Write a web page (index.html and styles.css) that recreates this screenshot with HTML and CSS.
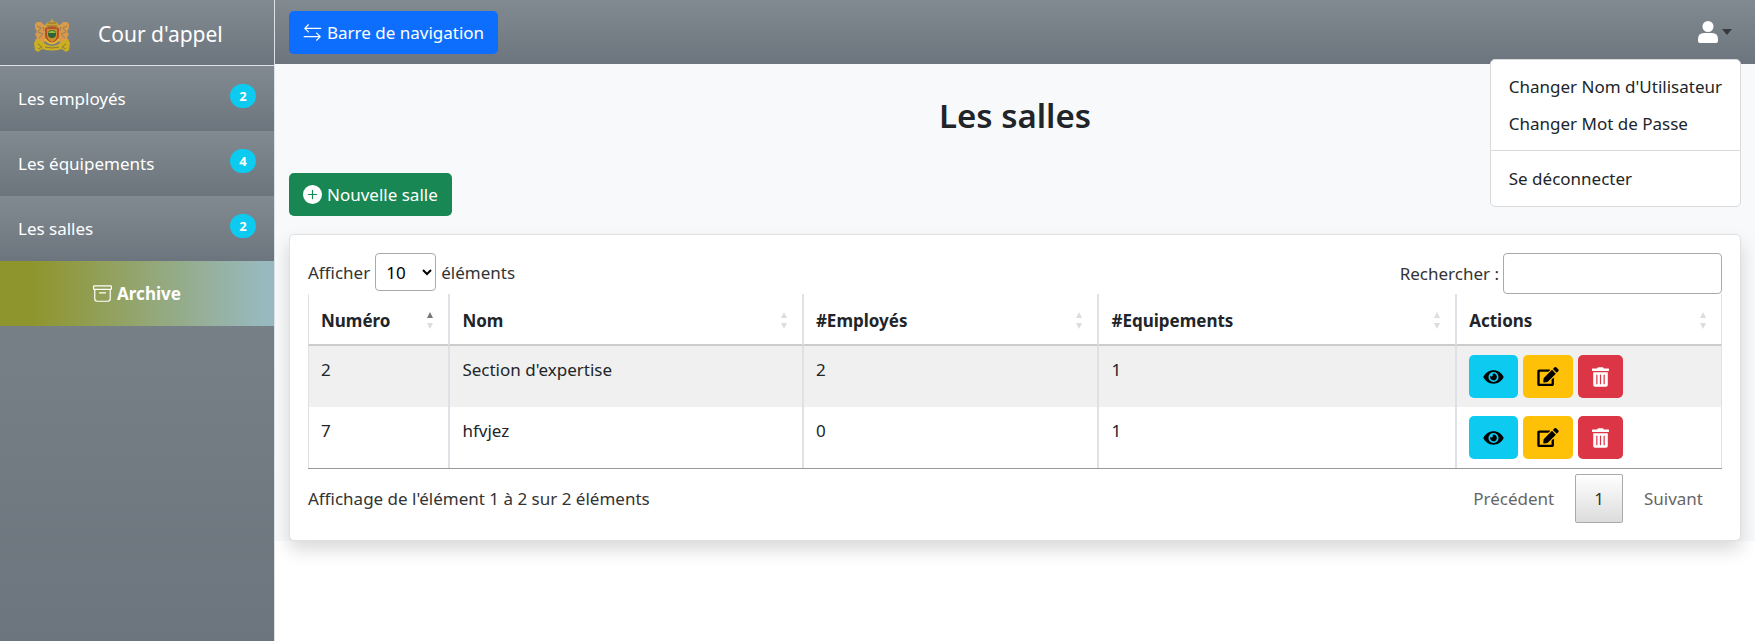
FILE: index.html
```html
<!DOCTYPE html>
<html lang="fr">
<head>
<meta charset="utf-8">
<meta name="viewport" content="width=device-width, initial-scale=1">
<title>Cour d'appel - Les salles</title>
<link rel="stylesheet" href="styles.css">
</head>
<body>
<svg class="sprite" aria-hidden="true">
  <symbol id="i-eye" viewBox="0 0 576 512"><path d="M572.5 241.4C518.3 135.600 410.900 64 288 64S57.700 135.600 3.500 241.400a32.400 32.400 0 0 0 0 29.200C57.700 376.400 165.100 448 288 448s230.300-71.600 284.500-177.400a32.400 32.400 0 0 0 0-29.200zM288 400a144 144 0 1 1 144-144 143.900 143.900 0 0 1-144 144zm0-240a95.300 95.300 0 0 0-25.300 3.800 47.900 47.900 0 0 1-66.900 66.900A95.800 95.800 0 1 0 288 160z"/></symbol>
  <symbol id="i-edit" viewBox="0 0 576 512"><path d="M402.600 83.200l90.200 90.200c3.800 3.800 3.800 10 0 13.800L274.400 405.600l-92.800 10.300c-12.400 1.400-22.900-9.100-21.500-21.500l10.300-92.800L388.800 83.200c3.800-3.800 10-3.800 13.800 0zm162-22.900l-48.800-48.800c-15.200-15.200-39.900-15.200-55.200 0l-35.400 35.400c-3.800 3.800-3.800 10 0 13.800l90.200 90.200c3.800 3.800 10 3.800 13.800 0l35.400-35.400c15.200-15.300 15.200-40 0-55.200zM384 346.200V448H64V128h229.800c3.200 0 6.200-1.300 8.500-3.500l40-40c7.600-7.600 2.200-20.500-8.500-20.500H48C21.500 64 0 85.500 0 112v352c0 26.500 21.500 48 48 48h352c26.500 0 48-21.500 48-48V306.200c0-10.700-12.900-16-20.500-8.500l-40 40c-2.200 2.300-3.500 5.300-3.500 8.500z"/></symbol>
  <symbol id="i-trash" viewBox="0 0 448 512"><path d="M32 464a48 48 0 0 0 48 48h288a48 48 0 0 0 48-48V128H32zm272-256a16 16 0 0 1 32 0v224a16 16 0 0 1-32 0zm-96 0a16 16 0 0 1 32 0v224a16 16 0 0 1-32 0zm-96 0a16 16 0 0 1 32 0v224a16 16 0 0 1-32 0zM432 32H312l-9.400-18.700A24 24 0 0 0 281.100 0H166.800a23.700 23.700 0 0 0-21.400 13.300L136 32H16A16 16 0 0 0 0 48v32a16 16 0 0 0 16 16h416a16 16 0 0 0 16-16V48a16 16 0 0 0-16-16z"/></symbol>
</svg>
<div class="layout">
  <aside class="sidebar">
    <div class="brand">
      <svg class="crest" viewBox="0 0 36 34" aria-hidden="true">
        <path d="M18 0l1 3 3 1 3 3-1 4H12l-1-4 3-3 3-1z" fill="#c9a43a"/>
        <path d="M14 5h8M13 8h10" stroke="#8e6a2a" stroke-width="1"/>
        <path d="M1 6l2-2h4l2 2 3 2 1 5-1 10-4 3-6-1-1-3 2-2-2-4 2-2-2-4z" fill="#d89a48"/>
        <path d="M35 6l-2-2h-4l-2 2-3 2-1 5 1 10 4 3 6-1 1-3-2-2 2-4-2-2 2-4z" fill="#d89a48"/>
        <path d="M3 8l4 2-3 4 5 2-4 4M33 8l-4 2 3 4-5 2 4 4M9 9l1 4M27 9l-1 4" fill="none" stroke="#8f8068" stroke-width="1"/>
        <path d="M11 10q7-3 14 0v8q0 5-7 8-7-3-7-8z" fill="#b5522b"/>
        <path d="M13 11h10v6q0 5-5 7-5-2-5-7z" fill="#c98f2c"/>
        <circle cx="18" cy="16" r="4" fill="#2f6335"/>
        <path d="M14 15q4-5 8 0z" fill="#8dbb45"/>
        <path d="M0 25q2-4 6-3l4 3q8 6 16 0l4-3q4-1 6 3l-1 7-3 2-4-3q-10 3-20 0l-4 3-3-2z" fill="#ccae22"/>
        <path d="M4 26l4 3-4 2M32 26l-4 3 4 2M11 29q7 2 14 0" fill="none" stroke="#8a7c35" stroke-width="1"/>
        <path d="M11 21q7 9 14 0" fill="none" stroke="#e2b932" stroke-width="2"/>
      </svg>
      <span>Cour d'appel</span>
    </div>
    <nav class="menu">
      <a class="menu-item" href="#">Les employés <span class="badge">2</span></a>
      <a class="menu-item" href="#">Les équipements <span class="badge">4</span></a>
      <a class="menu-item" href="#">Les salles <span class="badge">2</span></a>
      <a class="archive" href="#">
        <svg width="19" height="19" viewBox="0 0 16 16" fill="currentColor" aria-hidden="true"><path d="M0 2a1 1 0 0 1 1-1h14a1 1 0 0 1 1 1v2a1 1 0 0 1-1 1v7.500a2.500 2.500 0 0 1-2.500 2.500h-9A2.500 2.500 0 0 1 1 12.500V5a1 1 0 0 1-1-1V2zm2 3v7.500A1.500 1.500 0 0 0 3.500 14h9a1.500 1.500 0 0 0 1.500-1.500V5H2zm13-3H1v2h14V2zM5 7.500a.5.500 0 0 1 .5-.5h5a.5.500 0 0 1 0 1h-5a.5.500 0 0 1-.5-.5z"/></svg>
        Archive
      </a>
    </nav>
  </aside>
  <div class="page">
    <header class="topbar">
      <button class="btn btn-primary" type="button">
        <svg width="19" height="19" viewBox="0 0 16 16" fill="none" stroke="currentColor" stroke-linecap="round" stroke-linejoin="round" aria-hidden="true"><path d="M15 4.500H1.500M4.500 1.500l-3 3 3 3M1 11.500h13.500M11.500 8.500l3 3-3 3"/></svg>
        Barre de navigation
      </button>
      <div class="user">
        <button class="user-toggle" type="button" aria-label="Compte utilisateur" aria-expanded="true">
          <svg width="20" height="22" viewBox="0 0 20 22" fill="#fff" aria-hidden="true"><circle cx="10" cy="5.500" r="5.500"/><path d="M6 12h8q6 0 6 6v2q0 2-2 2H2q-2 0-2-2v-2q0-6 6-6z"/></svg>
          <span class="caret"></span>
        </button>
        <div class="dropdown">
          <a href="#">Changer Nom d'Utilisateur</a>
          <a href="#">Changer Mot de Passe</a>
          <hr>
          <a href="#">Se déconnecter</a>
        </div>
      </div>
    </header>
    <main class="content">
      <h1>Les salles</h1>
      <button class="btn btn-success" type="button">
        <svg width="19" height="19" viewBox="0 0 16 16" fill="currentColor" aria-hidden="true"><path d="M16 8A8 8 0 1 1 0 8a8 8 0 0 1 16 0zM8.500 4.500a.5.500 0 0 0-1 0v3h-3a.5.500 0 0 0 0 1h3v3a.5.500 0 0 0 1 0v-3h3a.5.500 0 0 0 0-1h-3v-3z"/></svg>
        Nouvelle salle
      </button>
      <section class="card">
        <div class="controls">
          <label class="length">Afficher
            <select><option>10</option><option>25</option><option>50</option><option>100</option></select>
            éléments</label>
          <label class="search">Rechercher : <input type="search"></label>
        </div>
        <table>
          <colgroup><col class="c-num"><col class="c-name"><col class="c-emp"><col class="c-equ"><col class="c-act"></colgroup>
          <thead>
            <tr>
              <th class="asc"><div>Numéro<i></i></div></th>
              <th><div>Nom<i></i></div></th>
              <th><div>#Employés<i></i></div></th>
              <th><div>#Equipements<i></i></div></th>
              <th><div>Actions<i></i></div></th>
            </tr>
          </thead>
          <tbody>
            <tr>
              <td>2</td><td>Section d'expertise</td><td>2</td><td>1</td>
              <td><div class="actions">
                <button class="btn btn-info" type="button" aria-label="Voir"><svg width="21" height="18"><use href="#i-eye"/></svg></button>
                <button class="btn btn-warning" type="button" aria-label="Modifier"><svg width="22" height="19"><use href="#i-edit"/></svg></button>
                <button class="btn btn-danger" type="button" aria-label="Supprimer"><svg width="17" height="20"><use href="#i-trash"/></svg></button>
              </div></td>
            </tr>
            <tr>
              <td>7</td><td>hfvjez</td><td>0</td><td>1</td>
              <td><div class="actions">
                <button class="btn btn-info" type="button" aria-label="Voir"><svg width="21" height="18"><use href="#i-eye"/></svg></button>
                <button class="btn btn-warning" type="button" aria-label="Modifier"><svg width="22" height="19"><use href="#i-edit"/></svg></button>
                <button class="btn btn-danger" type="button" aria-label="Supprimer"><svg width="17" height="20"><use href="#i-trash"/></svg></button>
              </div></td>
            </tr>
          </tbody>
        </table>
        <div class="table-foot">
          <div>Affichage de l'élément 1 à 2 sur 2 éléments</div>
          <div class="pager">
            <a class="off" href="#">Précédent</a>
            <a class="current" href="#">1</a>
            <a class="off" href="#">Suivant</a>
          </div>
        </div>
      </section>
    </main>
  </div>
</div>
</body>
</html>
```
FILE: styles.css
```css
* { box-sizing: border-box; }
body {
  margin: 0;
  background: #fff;
  color: #212529;
  font-family: "Noto Sans", "Open Sans", sans-serif;
  font-size: 17px;
  line-height: 27px;
}
a { color: inherit; text-decoration: none; }
button, select, input { font: inherit; color: inherit; }
svg { flex: none; }
.sprite { display: none; }
.layout { display: flex; min-height: 100vh; }

.sidebar {
  flex: none;
  width: 275px;
  border-right: 1px solid #dee2e6;
  background: linear-gradient(#828a91, #6c757d);
  color: #fff;
}
.brand {
  display: flex;
  align-items: center;
  gap: 28px;
  height: 66px;
  padding: 4px 34px 0;
  border-bottom: 1px solid #dee2e6;
  background: linear-gradient(#828a91, #6c757d);
  font-size: 21px;
}
.crest { width: 36px; height: 34px; }
.menu-item, .archive {
  display: flex;
  height: 65px;
  padding: 18px;
  background: linear-gradient(#828a91, #6c757d);
  line-height: 29px;
}
.menu-item { justify-content: space-between; }
.badge {
  height: 24px;
  min-width: 26px;
  border-radius: 12px;
  background: #0dcaf0;
  font-size: 13px;
  font-weight: 700;
  line-height: 24px;
  text-align: center;
}
.archive {
  align-items: center;
  justify-content: center;
  gap: 5px;
  background: linear-gradient(90deg, #8f952d 12%, #98b9c0 97%);
  font-weight: 700;
}

.page { flex: 1; min-width: 0; }
.topbar {
  display: flex;
  align-items: center;
  justify-content: space-between;
  height: 64px;
  padding: 0 14px;
  background: linear-gradient(#828a91, #6c757d);
}
.btn {
  display: inline-flex;
  align-items: center;
  gap: 5px;
  height: 43px;
  padding: 0 14px;
  border: 0;
  border-radius: 5px;
  color: #fff;
}
.btn-primary { background: #0d6efd; }
.btn-success { background: #198754; }
.btn-info { background: #0dcaf0; color: #000; }
.btn-warning { background: #ffc107; color: #000; }
.btn-danger { background: #dc3545; }

.user { position: relative; }
.user-toggle {
  display: flex;
  align-items: center;
  gap: 4px;
  padding: 0 9px;
  border: 0;
  background: none;
}
.caret {
  border: 5px solid transparent;
  border-top: 6px solid #343a40;
  border-bottom: 0;
}
.dropdown {
  position: absolute;
  top: 100%;
  right: 0;
  z-index: 2;
  margin-top: 16px;
  padding: 8px 0 9px;
  border: 1px solid #d9dadb;
  border-radius: 5px;
  background: #fff;
  white-space: nowrap;
}
.dropdown a { display: block; padding: 5px 18px; }
.dropdown hr { margin: 8px 0 9px; border: 0; border-top: 1px solid #d9dadb; }

.content { padding: 27px 14px 0; background: #f8f9fa; }
h1 {
  margin: 0 0 32px;
  font-size: 33px;
  font-weight: 600;
  line-height: 50px;
  text-align: center;
}
.card {
  margin-top: 18px;
  padding: 18px 18px 17px;
  border: 1px solid #dfe0e1;
  border-radius: 5px;
  background: #fff;
  box-shadow: 0 9px 18px rgba(0, 0, 0, .15);
  color: #333;
}
.controls { display: flex; justify-content: space-between; align-items: flex-start; }
.length { display: flex; align-items: center; gap: 5px; }
.search { display: flex; align-items: center; gap: 4px; }
.controls select, .controls input {
  border: 1px solid #aaa;
  border-radius: 4px;
  background: transparent;
}
.controls select { width: 61px; height: 38px; padding: 4px 0 4px 6px; color: #000; }
.controls input { width: 219px; height: 41px; padding: 5px; }

table {
  width: 100%;
  table-layout: fixed;
  border-collapse: separate;
  border-spacing: 0;
  border-bottom: 1px solid #999;
  color: #212529;
}
.c-num { width: 10%; }
.c-name { width: 25%; }
.c-emp { width: 20.9%; }
.c-equ { width: 25.3%; }
.c-act { width: 18.8%; }
th, td {
  padding: 9px 12px;
  border: 0 solid #dee2e6;
  border-right-width: 1px;
  border-left-width: 1px;
  text-align: left;
  vertical-align: top;
}
th { padding: 13px 15px 10px 12px; border-bottom: 2px solid #ccc; }
th div { display: flex; align-items: center; justify-content: space-between; }
th i { display: grid; gap: 5px; }
th i::before, th i::after {
  content: "";
  border: 3px solid transparent;
}
th i::before { border-top: 0; border-bottom: 6px solid #ddd; }
th i::after { border-bottom: 0; border-top: 6px solid #ddd; }
th.asc i::before { border-bottom-color: #777; }
td { line-height: 29px; }
tbody tr:nth-child(odd) { background: #f0f0f0; }
.actions { display: flex; gap: 5px; }
.actions svg { fill: currentColor; }

.table-foot { display: flex; justify-content: space-between; padding-top: 5px; }
.table-foot > div:first-child { padding-top: 11px; }
.pager { display: flex; gap: 2px; }
.pager a { padding: 10px 18px; border: 1px solid transparent; border-radius: 2px; }
.pager .off { color: #666; }
.pager .current {
  border-color: #aaa;
  background: linear-gradient(#fff, #dcdcdc);
}
```
